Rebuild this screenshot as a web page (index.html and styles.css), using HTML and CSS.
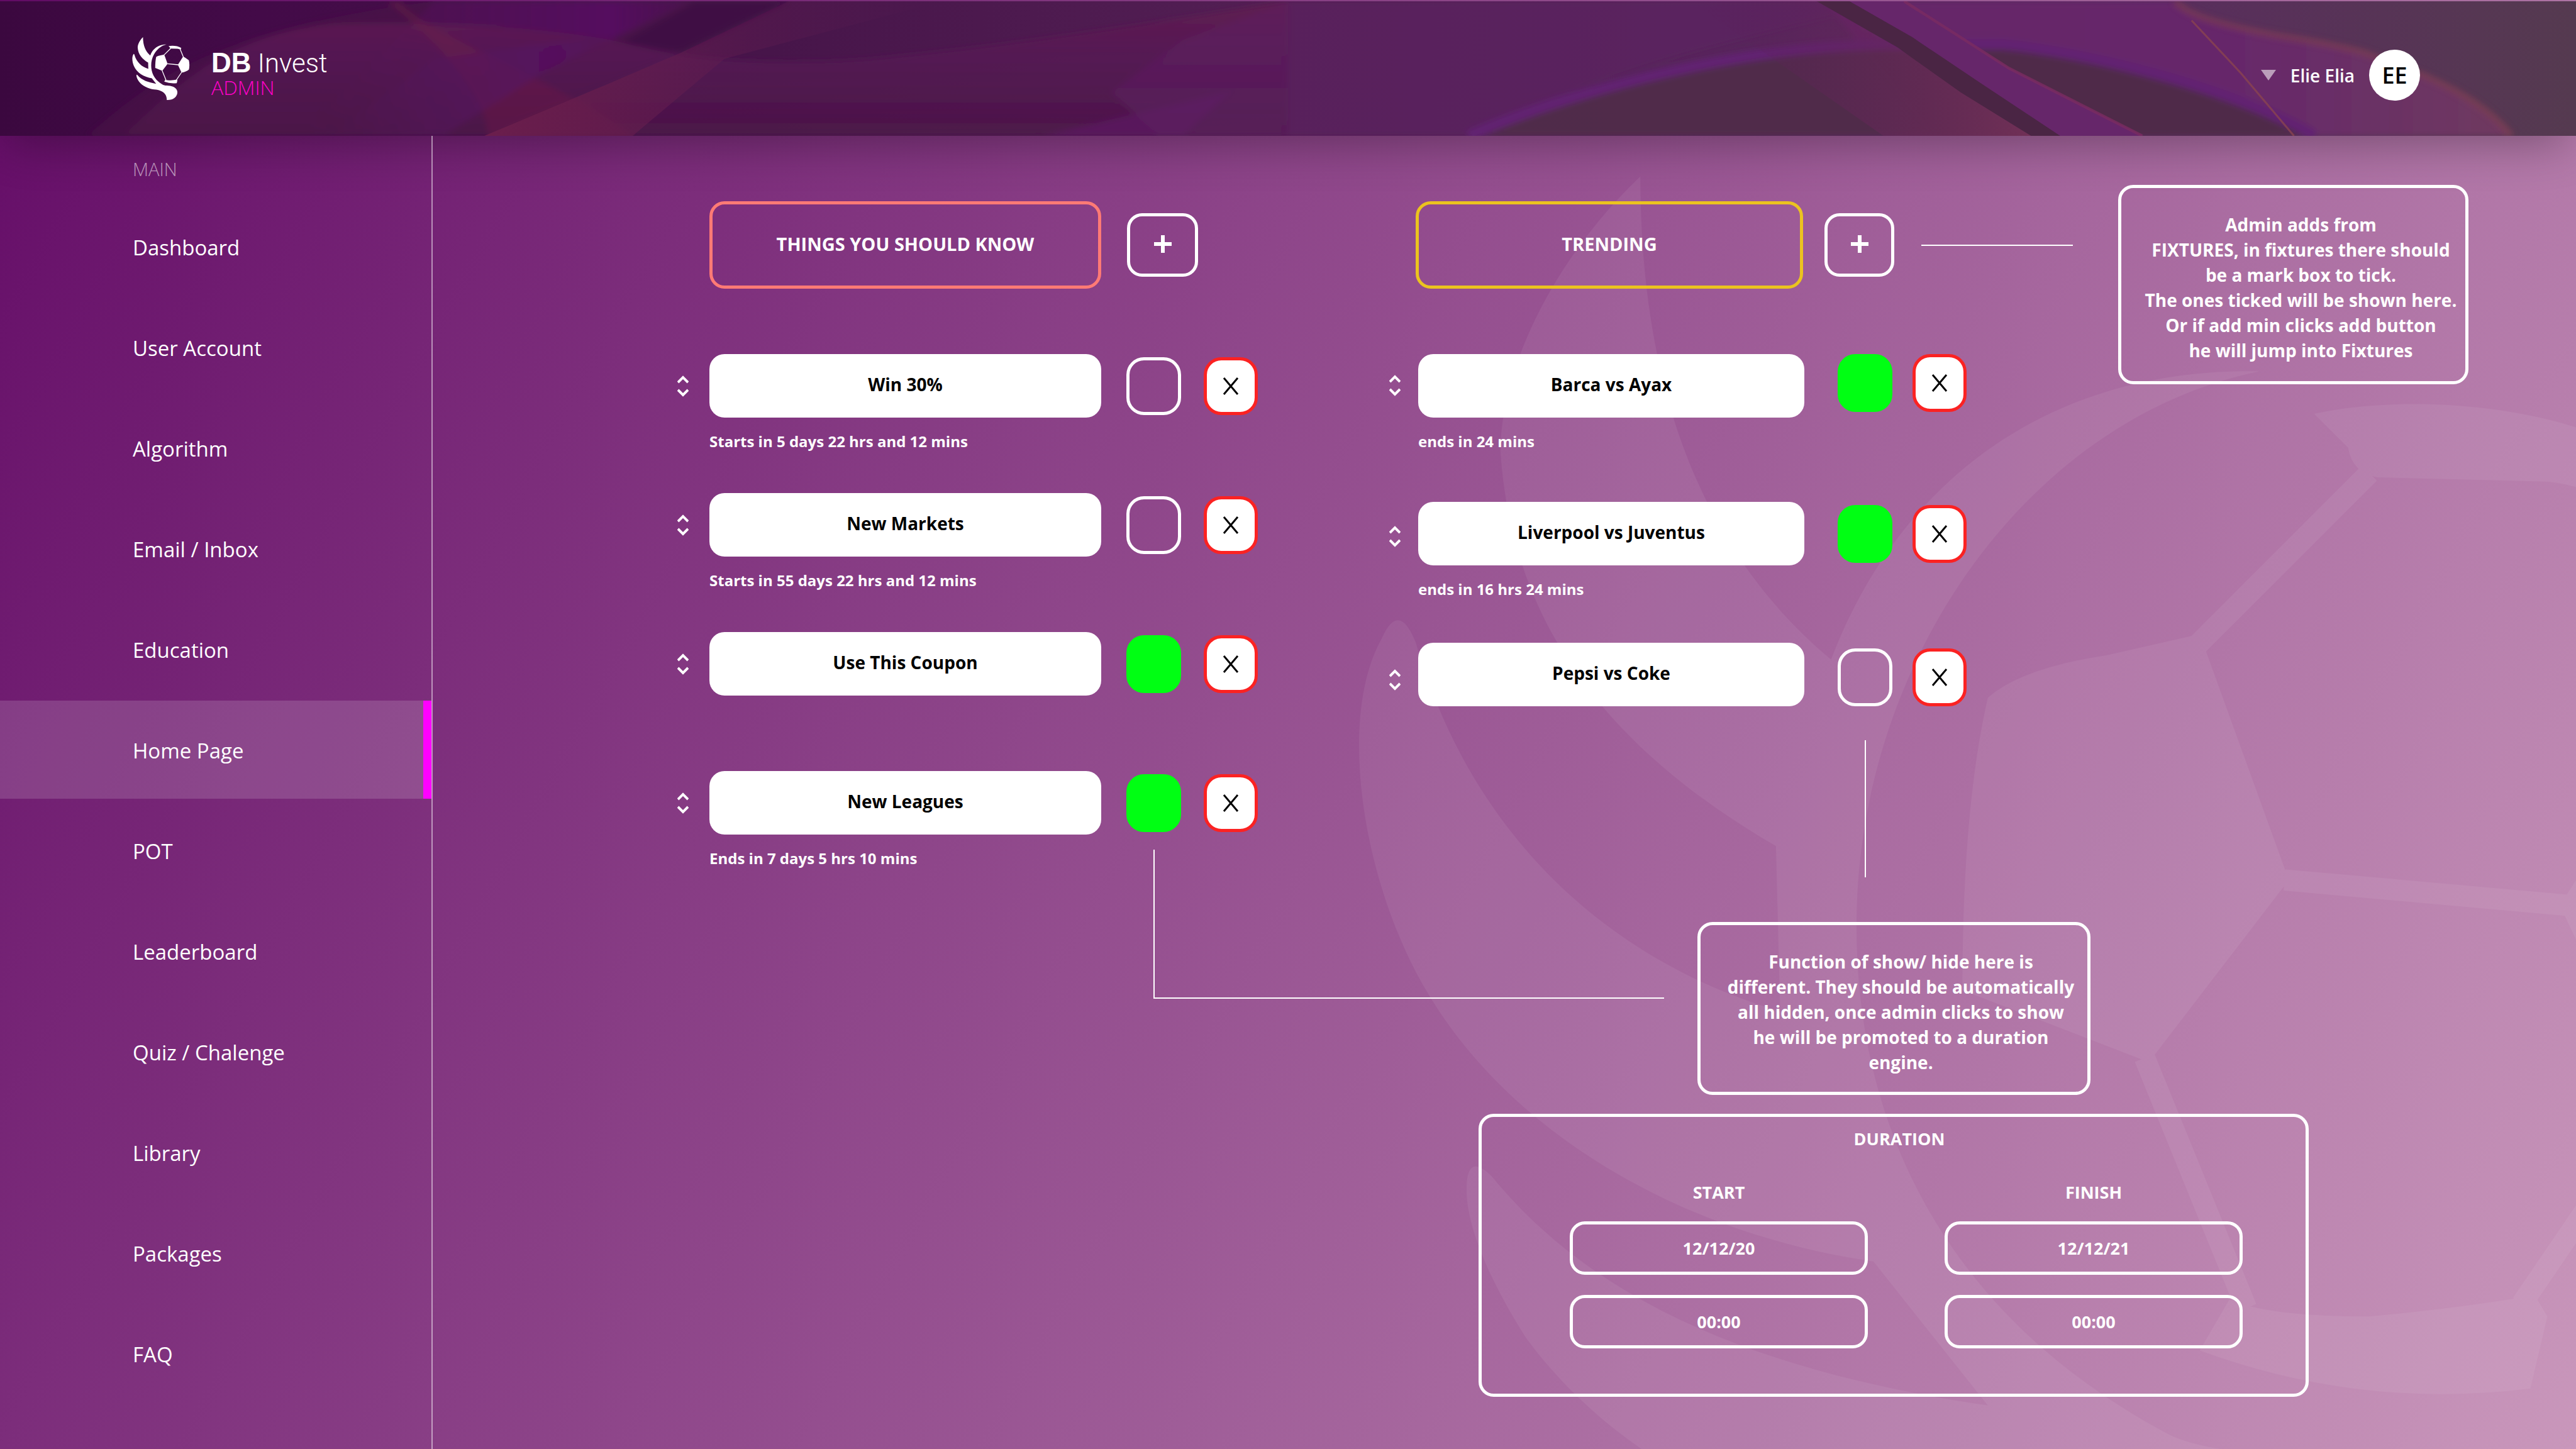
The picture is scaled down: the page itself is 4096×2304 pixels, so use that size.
FILE: index.html
```html
<!DOCTYPE html>
<html lang="en">
<head>
<meta charset="utf-8">
<meta name="viewport" content="width=device-width, initial-scale=1">
<title>DB Invest Admin</title>
<link rel="stylesheet" href="styles.css">
</head>
<body>
<svg class="defs" aria-hidden="true">
  <symbol id="logo" viewBox="162 138 360 397">
    <path fill="currentColor" d="M230 141C208 162 197 188 197 206C200 250 226 278 262 299L263 338C222 326 190 296 177 251Q173 241 169 250C160 266 163 296 173 320C190 362 236 390 285 397L312 431C265 424 222 410 195 377Q189 371 189 380C189 390 196 404 203 415C225 445 262 462 300 467C352 470 379 494 378 532C414 534 443 515 444 484C444 460 418 444 388 443C374 442 364 442 355 438C302 410 281 365 281 318C281 255 322 198 376 187C332 186 293 208 275 255C245 230 230 192 230 141Z"/>
    <path fill="currentColor" d="M389 197C412 192 448 195 468 208L464 220Q454 214 444 213L404 212Q398 211 397 205ZM312 264Q320 257 340 254L362 249L383 307L350 350L306 333Q306 290 312 264ZM480 261Q496 270 515 285Q522 310 516 342Q500 356 470 362L447 313ZM369 406Q378 410 402 410Q424 408 441 405L444 410L440 427Q400 432 362 418Z"/>
    <path fill="none" stroke="currentColor" stroke-width="5" stroke-linejoin="round" d="M361 252L402 211M462 218L481 264M382 307L449 313M349 349L373 408M470 360L438 407"/>
  </symbol>
  <symbol id="sort" viewBox="0 0 18 34">
    <path fill="none" stroke="currentColor" stroke-width="4" d="M1 11L9 3L17 11M1 23L9 31L17 23"/>
  </symbol>
  <symbol id="cross" viewBox="0 0 26 28">
    <path fill="none" stroke="currentColor" stroke-width="3" d="M2 1L24 27M24 1L2 27"/>
  </symbol>
  <symbol id="plus" viewBox="0 0 28 28">
    <path fill="none" stroke="currentColor" stroke-width="6" d="M14 0V28M0 14H28"/>
  </symbol>
</svg>

<div class="watermark" aria-hidden="true"><svg><use href="#logo"/></svg></div>

<header class="header">
  <svg class="header-art" viewBox="0 0 5334 281" preserveAspectRatio="none" aria-hidden="true">
    <defs>
      <linearGradient id="base"><stop offset="0" stop-color="#3b083f"/><stop offset=".1" stop-color="#430a48"/><stop offset=".3" stop-color="#47154a"/><stop offset=".5" stop-color="#531f54"/><stop offset=".8" stop-color="#5a2a60"/><stop offset="1" stop-color="#553a50"/></linearGradient>
      <linearGradient id="arch" x2="0" y2="1"><stop offset="0" stop-color="#601e50"/><stop offset=".4" stop-color="#561654" stop-opacity=".8"/><stop offset="1" stop-color="#4c1647" stop-opacity=".7"/></linearGradient>
      <linearGradient id="violet"><stop offset="0" stop-color="#54105e" stop-opacity="0"/><stop offset=".8" stop-color="#55105f"/><stop offset="1" stop-color="#4d1256" stop-opacity=".4"/></linearGradient>
      <linearGradient id="ridge"><stop offset="0" stop-color="#6b1e4c"/><stop offset="1" stop-color="#571b52" stop-opacity="0"/></linearGradient>
      <linearGradient id="rose"><stop offset="0" stop-color="#581c5a" stop-opacity="0"/><stop offset="1" stop-color="#703056"/></linearGradient>
      <linearGradient id="glow"><stop offset="0" stop-color="#652468"/><stop offset=".6" stop-color="#66286a"/><stop offset="1" stop-color="#6f3a60"/></linearGradient>
      <filter id="soft" x="-5%" y="-20%" width="110%" height="140%"><feGaussianBlur stdDeviation="6"/></filter>
    </defs>
    <rect width="5334" height="281" fill="url(#base)"/>
    <g filter="url(#soft)">
      <path fill="#4b1347" d="M0 281L180 281C300 180 420 60 900 0L1633 0L1003 281Z" opacity=".5"/>
      <path fill="url(#violet)" d="M900 0H1429L1122 150L918 281H620Z"/>
      <path fill="#3f0f42" opacity=".8" d="M1440 0H1633L1411 107L1290 85Z"/>
      <path fill="url(#arch)" d="M255 281C390 150 500 60 700 48C900 44 1100 50 1275 83C1340 100 1411 115 1500 121C1600 128 1750 128 1850 115C2050 95 2300 60 2667 0V281Z"/>
      <path fill="#6c2046" opacity=".45" d="M830 0C860 60 1150 160 1310 281H1010C1010 210 920 90 800 0Z"/>
      <path fill="url(#violet)" opacity=".8" d="M900 120L1275 70L1122 150L918 281H680Z"/>
      <path fill="#5b1a60" opacity=".8" d="M2551 187L2160 281H2449Z"/>
      <path fill="#5e1f62" opacity=".5" d="M2667 0L2450 80L2300 190L2400 281H3041C3350 130 3600 80 3926 0Z"/>
      <path fill="url(#glow)" d="M3780 0H4504C4530 30 4600 50 4725 73C4800 85 4850 95 4895 107C4960 130 5000 150 5014 153C5100 190 5160 230 5201 281H4000Z"/>
      <path fill="#4f2a49" opacity=".95" d="M3041 281C3250 190 3600 90 3926 90H4147C4300 105 4600 170 4793 281Z"/>
      <path fill="none" stroke="#622272" stroke-width="22" d="M3041 281C3250 190 3600 90 3926 90H4147C4300 105 4600 170 4793 281"/>
    </g>
    <path fill="url(#ridge)" d="M1633 0L1411 107L1258 173L1003 281H1310L1500 120L1950 0Z"/>
    <path fill="url(#rose)" d="M3500 0H3762L3930 97L4060 190L4206 281H3900Z"/>
    <path fill="#4a2544" d="M3762 0L3930 97L4060 190L4206 281H4266L4100 170L3960 75L3830 0Z"/>
    <path fill="#66266a" d="M3830 0L3960 75L4100 170L4266 281H4436L4160 140L3943 0Z"/>
    <path fill="none" stroke="#7b2c62" stroke-width="6" opacity=".8" d="M3943 0L4160 140L4436 281"/>
    <path fill="none" stroke="#8a4450" stroke-width="4" opacity=".8" d="M4538 40L4640 150L4750 281"/>
    <path fill="none" stroke="#87424f" stroke-width="14" opacity=".5" filter="url(#soft)" d="M4504 0C4530 30 4600 50 4725 73C4800 85 4850 95 4895 107C4960 130 5000 150 5014 153C5100 190 5160 230 5201 281"/>
  </svg>
  <a class="brand" href="#">
    <svg class="brand-mark" aria-hidden="true"><use href="#logo"/></svg>
    <span class="brand-text">
      <span class="brand-name"><b>DB</b> Invest</span>
      <span class="brand-role">ADMIN</span>
    </span>
  </a>
  <button class="user" type="button">
    <span class="user-caret"></span>
    <span class="user-name">Elie Elia</span>
    <span class="avatar">EE</span>
  </button>
</header>

<div class="layout">
  <nav class="sidebar" aria-label="Main">
    <h2 class="sidebar-title">MAIN</h2>
    <ul class="menu">
      <li><a href="#">Dashboard</a></li>
      <li><a href="#">User Account</a></li>
      <li><a href="#">Algorithm</a></li>
      <li><a href="#">Email / Inbox</a></li>
      <li><a href="#">Education</a></li>
      <li><a class="active" href="#" aria-current="page">Home Page</a></li>
      <li><a href="#">POT</a></li>
      <li><a href="#">Leaderboard</a></li>
      <li><a href="#">Quiz / Chalenge</a></li>
      <li><a href="#">Library</a></li>
      <li><a href="#">Packages</a></li>
      <li><a href="#">FAQ</a></li>
    </ul>
  </nav>

  <main class="main">
    <div class="board">
      <section class="promos know">
        <div class="promos-head">
          <h2 class="promos-title">THINGS YOU SHOULD KNOW</h2>
          <button class="add" type="button" aria-label="Add item"><svg><use href="#plus"/></svg></button>
        </div>
        <ul class="promos-list">
          <li>
            <div class="row">
              <button class="sort" type="button" aria-label="Reorder"><svg><use href="#sort"/></svg></button>
              <p class="pill">Win 30%</p>
              <input class="toggle" type="checkbox" aria-label="Show Win 30%">
              <button class="remove" type="button" aria-label="Remove"><svg><use href="#cross"/></svg></button>
            </div>
            <p class="caption">Starts in 5 days 22 hrs and 12 mins</p>
          </li>
          <li>
            <div class="row">
              <button class="sort" type="button" aria-label="Reorder"><svg><use href="#sort"/></svg></button>
              <p class="pill">New Markets</p>
              <input class="toggle" type="checkbox" aria-label="Show New Markets">
              <button class="remove" type="button" aria-label="Remove"><svg><use href="#cross"/></svg></button>
            </div>
            <p class="caption">Starts in 55 days 22 hrs and 12 mins</p>
          </li>
          <li>
            <div class="row">
              <button class="sort" type="button" aria-label="Reorder"><svg><use href="#sort"/></svg></button>
              <p class="pill">Use This Coupon</p>
              <input class="toggle" type="checkbox" aria-label="Show Use This Coupon" checked>
              <button class="remove" type="button" aria-label="Remove"><svg><use href="#cross"/></svg></button>
            </div>
          </li>
          <li>
            <div class="row">
              <button class="sort" type="button" aria-label="Reorder"><svg><use href="#sort"/></svg></button>
              <p class="pill">New Leagues</p>
              <input class="toggle" type="checkbox" aria-label="Show New Leagues" checked>
              <button class="remove" type="button" aria-label="Remove"><svg><use href="#cross"/></svg></button>
            </div>
            <p class="caption">Ends in 7 days 5 hrs 10 mins</p>
          </li>
        </ul>
      </section>

      <section class="promos trending">
        <div class="promos-head">
          <h2 class="promos-title">TRENDING</h2>
          <button class="add" type="button" aria-label="Add fixture"><svg><use href="#plus"/></svg></button>
        </div>
        <ul class="promos-list">
          <li class="tall">
            <div class="row row-start">
              <button class="sort" type="button" aria-label="Reorder"><svg><use href="#sort"/></svg></button>
              <p class="pill">Barca vs Ayax</p>
              <input class="toggle" type="checkbox" aria-label="Show Barca vs Ayax" checked>
              <button class="remove" type="button" aria-label="Remove"><svg><use href="#cross"/></svg></button>
            </div>
            <p class="caption">ends in 24 mins</p>
          </li>
          <li>
            <div class="row">
              <button class="sort" type="button" aria-label="Reorder"><svg><use href="#sort"/></svg></button>
              <p class="pill">Liverpool vs Juventus</p>
              <input class="toggle" type="checkbox" aria-label="Show Liverpool vs Juventus" checked>
              <button class="remove" type="button" aria-label="Remove"><svg><use href="#cross"/></svg></button>
            </div>
            <p class="caption">ends in 16 hrs 24 mins</p>
          </li>
          <li>
            <div class="row row-end">
              <button class="sort" type="button" aria-label="Reorder"><svg><use href="#sort"/></svg></button>
              <p class="pill">Pepsi vs Coke</p>
              <input class="toggle" type="checkbox" aria-label="Show Pepsi vs Coke">
              <button class="remove" type="button" aria-label="Remove"><svg><use href="#cross"/></svg></button>
            </div>
          </li>
        </ul>
        <div class="link-down"></div>
      </section>

      <div class="link-across"></div>

      <aside class="note note-fixtures">
        <p>Admin adds from<br>FIXTURES, in fixtures there should<br>be a mark box to tick.<br>The ones ticked will be shown here.<br>Or if add min clicks add button<br>he will jump into Fixtures</p>
      </aside>
    </div>

    <div class="explain">
      <div class="link-corner"></div>
      <aside class="note note-toggle">
        <p>Function of show/ hide here is<br>different. They should be automatically<br>all hidden, once admin clicks to show<br>he will be promoted to a duration<br>engine.</p>
      </aside>
    </div>

    <div class="duration-row">
      <form class="duration">
        <h2>DURATION</h2>
        <div class="duration-fields">
          <div class="field">
            <label for="start-date">START</label>
            <input id="start-date" type="text" value="12/12/20">
            <input type="text" value="00:00" aria-label="Start time">
          </div>
          <div class="field">
            <label for="finish-date">FINISH</label>
            <input id="finish-date" type="text" value="12/12/21">
            <input type="text" value="00:00" aria-label="Finish time">
          </div>
        </div>
      </form>
    </div>
  </main>
</div>
</body>
</html>
```

FILE: styles.css
```css
*,
*::before,
*::after {
  box-sizing: border-box;
}

body {
  position: relative;
  display: flex;
  flex-direction: column;
  min-height: 100vh;
  margin: 0;
  overflow-x: hidden;
  background: linear-gradient(119deg, #640c67, #c997bb);
  color: #fff;
  font-family: "Open Sans", "Noto Sans", sans-serif;
  font-size: 28px;
}

h2,
p,
ul {
  margin: 0;
  padding: 0;
}

h2 {
  font-size: inherit;
}

ul {
  list-style: none;
}

a {
  color: inherit;
  text-decoration: none;
}

button {
  display: grid;
  place-items: center;
  padding: 0;
  border: 0;
  background: none;
  color: inherit;
  font: inherit;
}

.defs {
  position: absolute;
  width: 0;
  height: 0;
}

/* Oversized brand mark behind the content, cut off by the window */
.watermark {
  position: absolute;
  inset: 260px 0 0 2150px;
  overflow: hidden;
  opacity: .06;
}

.watermark svg {
  display: block;
  width: 2426px;
  height: 2676px;
}

/* Header */
.header {
  position: relative;
  display: flex;
  align-items: center;
  justify-content: space-between;
  height: 216px;
  padding: 0 248px 0 210px;
  border-top: 2px solid transparent;
  background: #47154a padding-box;
  box-shadow: 0 24px 72px -12px rgba(0, 0, 0, .3);
}

.header-art {
  position: absolute;
  inset: 0;
  width: 100%;
  height: 100%;
}

.brand {
  position: relative;
  display: flex;
  gap: 34px;
}

.brand-mark {
  width: 92px;
  height: 102px;
}

.brand-text {
  display: flex;
  flex-direction: column;
  padding-top: 20px;
}

.brand-name {
  font: 300 42px/44px Roboto, sans-serif;
}

.brand-name b {
  font-family: "Liberation Sans", sans-serif;
  font-size: 44px;
  font-weight: 700;
}

.brand-role {
  color: #ff00c8;
  font-size: 32px;
  font-weight: 300;
  line-height: 32px;
}

.user {
  position: relative;
  display: flex;
  align-items: center;
  gap: 23px;
  margin-top: 21px;
}

.user-caret {
  border: 12px solid transparent;
  border-top: 17px solid rgba(255, 255, 255, .55);
  border-bottom: 0;
}

.user-name {
  font-weight: 600;
}

.avatar {
  display: grid;
  place-items: center;
  width: 81px;
  height: 81px;
  border-radius: 50%;
  background: #fff;
  color: #000;
  font-size: 36px;
  font-weight: 600;
}

/* Page frame */
.layout {
  position: relative;
  display: grid;
  flex: 1;
  grid-template-columns: 688px minmax(0, 1fr);
}

.sidebar {
  padding-top: 34px;
  border-right: 2px solid rgba(255, 255, 255, .5);
}

.sidebar-title {
  margin-bottom: 26px;
  padding-left: 211px;
  color: rgba(255, 255, 255, .55);
  font-size: 29px;
  font-weight: 300;
  line-height: 38px;
}

.menu {
  display: grid;
  gap: 4px;
}

.menu a {
  display: block;
  padding: 4px 0 0 211px;
  font-size: 33px;
  line-height: 152px;
}

.menu .active {
  border-right: 13px solid #f0f;
  background: rgba(255, 255, 255, .15) padding-box;
}

/* Promo lists */
.main {
  padding: 78px 0 80px;
}

.board {
  display: grid;
  grid-template-columns:
    minmax(0, 389fr) minmax(0, 925fr) minmax(0, 207fr) minmax(0, 918fr)
    minmax(0, 241fr) minmax(0, 557fr) minmax(0, 171fr);
  align-items: start;
}

.promos {
  margin-top: 26px;
}

.know {
  grid-column: 2;
}

.trending {
  grid-column: 4;
}

.promos-head {
  display: flex;
  align-items: center;
  gap: 41px;
  margin: 0 97px 104px 51px;
}

.promos-title {
  display: grid;
  flex: 1;
  place-items: center;
  height: 139px;
  padding-bottom: 4px;
  border: 5px solid #ff7a75;
  border-radius: 24px;
  font-size: 29px;
}

.add {
  width: 113px;
  height: 101px;
  padding-bottom: 4px;
  border: 5px solid #fff;
  border-radius: 24px;
}

.add svg {
  width: 28px;
  height: 28px;
}

.promos-list {
  display: grid;
  gap: 66px;
}

.promos-list li {
  min-height: 155px;
}

.row {
  display: flex;
  align-items: center;
}

.sort {
  width: 18px;
  height: 92px;
  margin-right: 33px;
}

.sort svg {
  width: 18px;
  height: 34px;
}

.pill {
  flex: 1;
  height: 101px;
  padding-bottom: 4px;
  border-radius: 24px;
  background: #fff;
  color: #000;
  font-weight: 700;
  line-height: 97px;
  text-align: center;
}

.toggle {
  width: 87px;
  height: 92px;
  margin: 0 36px 0 40px;
  border: 5px solid #fff;
  border-radius: 28px;
  appearance: none;
}

.toggle:checked {
  border-color: #00ff13;
  background: #00ff13;
}

.remove {
  width: 86px;
  height: 92px;
  border: 5px solid #fb2222;
  border-radius: 28px;
  background: #fff;
  color: #000;
}

.remove svg {
  width: 26px;
  height: 28px;
}

.caption {
  margin: 22px 0 0 51px;
  font-size: 24px;
  font-weight: 700;
  line-height: 32px;
}

.know .row {
  padding-right: 2px;
}

.trending .promos-head {
  gap: 34px;
  margin: 0 115px 104px 42px;
}

.trending .promos-title {
  border-color: #ebc31f;
}

.trending .add {
  width: 111px;
}

.trending .promos-list {
  gap: 69px;
}

.trending .sort {
  margin-right: 28px;
  padding-top: 8px;
}

.trending .toggle {
  margin: 0 32px 0 53px;
}

.trending .caption {
  margin-left: 46px;
}

.trending .tall {
  min-height: 166px;
}

.trending li:last-child {
  min-height: 0;
}

.row-start {
  align-items: flex-start;
}

.row-end {
  align-items: flex-end;
}

/* Annotations */
.link-across {
  grid-column: 5;
  height: 2px;
  margin: 95px 72px 0 -72px;
  background: #fff;
}

.link-down {
  width: 2px;
  height: 218px;
  margin: 54px 0 0 756px;
  background: #fff;
}

.note {
  border: 5px solid #fff;
  border-radius: 24px;
  font-weight: 700;
  line-height: 40px;
  text-align: center;
  white-space: nowrap;
}

.note-fixtures {
  grid-column: 6;
  padding: 38px 9px 29px 33px;
}

.explain {
  display: grid;
  grid-template-columns:
    minmax(0, 1146fr) minmax(0, 812fr) minmax(0, 53fr) minmax(0, 625fr)
    minmax(0, 772fr);
  align-items: start;
  margin-top: -44px;
}

.link-corner {
  grid-column: 2;
  height: 237px;
  border: solid #fff;
  border-width: 0 0 2px 2px;
}

.note-toggle {
  grid-column: 4;
  margin-top: 115px;
  padding: 38px 10px 27px 32px;
}

.duration-row {
  display: grid;
  grid-template-columns: minmax(0, 1663fr) minmax(0, 1320fr) minmax(0, 425fr);
  margin-top: 30px;
}

.duration {
  grid-column: 2;
  padding: 17px 0 72px 18px;
  border: 5px solid #fff;
  border-radius: 24px;
  font-size: 27px;
  font-weight: 700;
  line-height: 36px;
  text-align: center;
}

.duration-fields {
  display: grid;
  grid-template-columns: 1fr 1fr;
  gap: 122px;
  margin: 49px 100px 0 122px;
}

.field {
  display: grid;
  gap: 32px;
}

.field label {
  margin-bottom: -4px;
}

.field input {
  width: 100%;
  height: 85px;
  padding: 0;
  border: 5px solid #fff;
  border-radius: 24px;
  background: none;
  color: inherit;
  font: inherit;
  text-align: inherit;
}
```
